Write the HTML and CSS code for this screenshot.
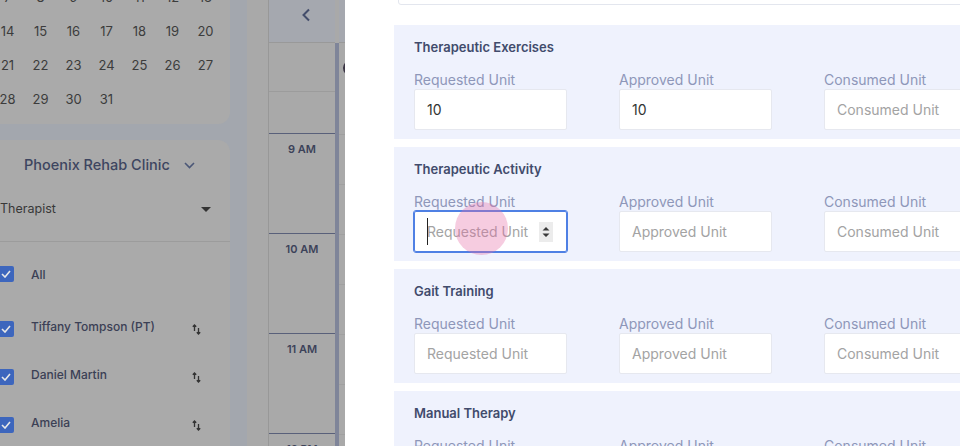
FILE: index.html
```html
<!DOCTYPE html>
<html>
<head>
<meta charset="utf-8">
<link rel="stylesheet" href="styles.css">
</head>
<body>
<div class="app">
  <aside class="sidebar">
    <div class="card cal-card">
      <div class="dates">
        <span>7</span><span>8</span><span>9</span><span>10</span><span>11</span><span>12</span><span>13</span>
        <span>14</span><span>15</span><span>16</span><span>17</span><span>18</span><span>19</span><span>20</span>
        <span>21</span><span>22</span><span>23</span><span>24</span><span>25</span><span>26</span><span>27</span>
        <span>28</span><span>29</span><span>30</span><span>31</span>
      </div>
    </div>
    <div class="card filter-card">
      <div class="clinic">
        <span>Phoenix Rehab Clinic</span>
        <svg class="chev" width="11" height="7" viewBox="0 0 11 7"><path d="M1 1l4.5 4.5L10 1" fill="none" stroke="#4b5777" stroke-width="1.6"/></svg>
      </div>
      <div class="select">
        <span>Therapist</span>
        <svg width="10" height="5" viewBox="0 0 10 5"><path d="M0 0h10L5 5z" fill="#333"/></svg>
      </div>
      <ul class="list">
        <li class="item first"><span class="cb"><svg width="10" height="8" viewBox="0 0 10 8"><path d="M1 4l3 3 5-6" fill="none" stroke="#e8e8e8" stroke-width="1.6"/></svg></span><span class="name">All</span></li>
        <li class="item"><span class="cb"><svg width="10" height="8" viewBox="0 0 10 8"><path d="M1 4l3 3 5-6" fill="none" stroke="#e8e8e8" stroke-width="1.6"/></svg></span><span class="name">Tiffany Tompson (PT)</span><svg class="sort" width="9" height="11" viewBox="0 0 9 11"><path d="M2.5 7V1M0.8 2.8L2.5 1l1.7 1.8M6.5 4v6M4.8 8.2L6.5 10l1.7-1.8" fill="none" stroke="#333" stroke-width="1.3"/></svg></li>
        <li class="item"><span class="cb"><svg width="10" height="8" viewBox="0 0 10 8"><path d="M1 4l3 3 5-6" fill="none" stroke="#e8e8e8" stroke-width="1.6"/></svg></span><span class="name">Daniel Martin</span><svg class="sort" width="9" height="11" viewBox="0 0 9 11"><path d="M2.5 7V1M0.8 2.8L2.5 1l1.7 1.8M6.5 4v6M4.8 8.2L6.5 10l1.7-1.8" fill="none" stroke="#333" stroke-width="1.3"/></svg></li>
        <li class="item"><span class="cb"><svg width="10" height="8" viewBox="0 0 10 8"><path d="M1 4l3 3 5-6" fill="none" stroke="#e8e8e8" stroke-width="1.6"/></svg></span><span class="name">Amelia</span><svg class="sort" width="9" height="11" viewBox="0 0 9 11"><path d="M2.5 7V1M0.8 2.8L2.5 1l1.7 1.8M6.5 4v6M4.8 8.2L6.5 10l1.7-1.8" fill="none" stroke="#333" stroke-width="1.3"/></svg></li>
      </ul>
    </div>
  </aside>
  <div class="gap"></div>
  <section class="calendar">
    <div class="strip"></div>
    <div class="times">
      <div class="head"><svg width="10" height="14" viewBox="0 0 10 14"><path d="M8 1.5L2.5 7 8 12.5" fill="none" stroke="#434d6b" stroke-width="2"/></svg></div>
      <div class="allday"></div>
      <div class="pre"></div>
      <div class="hour">9 AM</div>
      <div class="hour">10 AM</div>
      <div class="hour">11 AM</div>
      <div class="hour">12 PM</div>
    </div>
    <div class="bar"></div>
    <div class="col">
      <div class="col-head"></div>
      <div class="col-top"><span class="avatar"></span></div>
      <div class="slots"><i></i><i></i><i></i><i></i><i></i><i></i><i></i><i></i></div>
    </div>
  </section>
  <main class="drawer">
    <div class="top-input"></div>
    <div class="sec">
      <div class="title">Therapeutic Exercises</div>
      <div class="fields">
        <div class="field"><label>Requested Unit</label><div class="box val">10</div></div>
        <div class="field"><label>Approved Unit</label><div class="box val">10</div></div>
        <div class="field"><label>Consumed Unit</label><div class="box">Consumed Unit</div></div>
      </div>
    </div>
    <div class="sec">
      <div class="title">Therapeutic Activity</div>
      <div class="fields">
        <div class="field"><label>Requested Unit</label>
          <div class="box focus"><span class="caret"></span>Requested Unit
            <span class="spin"><svg width="8" height="14" viewBox="0 0 8 14"><path d="M0.5 5.5L4 2l3.5 3.5zM0.5 8.5L4 12l3.5-3.5z" fill="#3a3a3a"/></svg></span>
            <span class="ripple"></span>
          </div>
        </div>
        <div class="field"><label>Approved Unit</label><div class="box">Approved Unit</div></div>
        <div class="field"><label>Consumed Unit</label><div class="box">Consumed Unit</div></div>
      </div>
    </div>
    <div class="sec">
      <div class="title">Gait Training</div>
      <div class="fields">
        <div class="field"><label>Requested Unit</label><div class="box">Requested Unit</div></div>
        <div class="field"><label>Approved Unit</label><div class="box">Approved Unit</div></div>
        <div class="field"><label>Consumed Unit</label><div class="box">Consumed Unit</div></div>
      </div>
    </div>
    <div class="sec">
      <div class="title">Manual Therapy</div>
      <div class="fields">
        <div class="field"><label>Requested Unit</label><div class="box">Requested Unit</div></div>
        <div class="field"><label>Approved Unit</label><div class="box">Approved Unit</div></div>
        <div class="field"><label>Consumed Unit</label><div class="box">Consumed Unit</div></div>
      </div>
    </div>
  </main>
</div>
</body>
</html>
```
FILE: styles.css
```css
* { box-sizing: border-box; }
html, body { margin: 0; padding: 0; }
body {
  width: 960px; height: 446px; overflow: hidden;
  font-family: Inter, "Open Sans", sans-serif;
  background: #a3a7ae;
}
.app { display: flex; height: 446px; overflow: hidden; }

/* sidebar */
.sidebar { width: 230px; flex: none; display: flex; flex-direction: column; overflow: hidden; }
.card { background: #aaaaaa; }
.cal-card { flex: none; height: 124px; border-bottom-right-radius: 12px; overflow: hidden; }
.dates {
  display: grid; grid-template-columns: repeat(7, 33px); grid-auto-rows: 34px;
  margin: -20px 0 0 -9px;
  font-size: 13px; color: #3c3c3c;
}
.dates span { display: flex; align-items: center; justify-content: center; }
.filter-card { flex: none; margin-top: 16px; border-top-right-radius: 12px; padding-bottom: 40px; }
.clinic {
  height: 48px; display: flex; align-items: center; padding: 0 0 0 24px;
  font-size: 14.5px; font-weight: 500; color: #3d4560;
}
.clinic .chev { margin-left: 14px; margin-top: 2px; }
.select {
  height: 53px; display: flex; align-items: flex-start; justify-content: space-between;
  padding: 12px 19px 0 0; line-height: 18px;
  font-size: 12.5px; color: #383838;
}
.select svg { margin-top: 7px; }
.list { list-style: none; margin: 0; padding: 8px 0 0; border-top: 1px solid #9c9c9c; }
.item { height: 48px; display: flex; align-items: center; font-size: 12px; font-weight: 500; color: #3b4055; }
.item.first { margin-bottom: 7px; }
.cb {
  width: 16px; height: 16px; margin-left: -2px; border-radius: 2px; background: #3d66bd;
  display: flex; align-items: center; justify-content: center; flex: none;
}
.name { margin-left: 17px; margin-top: -5px; flex: 1; }
.first .name { margin-top: 0; }
.sort { margin-right: 29px; }

.gap { width: 17px; flex: none; }

/* calendar */
.calendar { width: 98px; flex: none; display: flex; background: #a9a9a9; }
.strip { width: 22px; border-right: 1px solid #989898; flex: none; }
.times { width: 66px; flex: none; }
.head { height: 43px; background: #a5a8af; border-bottom: 1px solid #999; display: flex; align-items: center; justify-content: center; padding: 0 0 12px 8px; }
.allday { height: 49px; border-bottom: 1px solid #9c9c9c; }
.pre { height: 41px; }
.hour {
  height: 100px; border-top: 1px solid #59607a; padding-top: 8px;
  font-size: 11px; font-weight: 600; color: #3c4259; text-align: center;
}
.bar { width: 4px; flex: none; background: #7f8599; margin-top: 43px; }
.col { width: 6px; flex: none; overflow: hidden; }
.col-head { height: 43px; background: #a5a8af; border-bottom: 1px solid #999; }
.col-top { height: 92px; border-bottom: 1px solid #9f9f9f; position: relative; }
.avatar { position: absolute; left: 4px; top: 17px; width: 16px; height: 16px; border-radius: 50%; background: #3a3444; }
.slots i { display: block; height: 50px; border-bottom: 1px solid #a0a0a0; }

/* drawer */
.drawer { flex: 1; background: #fff; padding-left: 49px; overflow: hidden; }
.top-input { height: 41px; margin: -36px 0 20px 4px; border: 1px solid #e3e6ee; border-radius: 3px; width: 700px; }
.sec {
  background: #eff2fd; width: 700px; height: 114px; margin-bottom: 8px;
  padding: 14px 0 0 20px;
}
.title { font-size: 13px; font-weight: 600; line-height: 16px; color: #414b6c; }
.fields { display: grid; grid-template-columns: repeat(3, 153px); column-gap: 52px; margin-top: 14px; }
.field label { display: block; font-size: 14px; line-height: 20px; color: #8e97b9; padding-top: 1px; }
.box {
  height: 41px; background: #fff; border: 1px solid #e6e8ef; border-radius: 2px;
  padding-left: 12px; display: flex; align-items: center;
  font-size: 14px; color: #a3a3a3; position: relative; margin-top: -1px;
}
.box.val { color: #333; }
.box.focus { outline: 1px solid #4f80e4; border-color: #4f80e4; }
.caret { width: 1px; height: 27px; background: #222; position: absolute; left: 12px; top: 6px; }
.spin { margin-left: auto; margin-right: 13px; width: 14px; height: 20px; background: #ececec; display: flex; align-items: center; justify-content: center; }
.ripple { position: absolute; left: 40px; top: -10px; width: 53px; height: 53px; border-radius: 50%; background: rgba(230, 110, 165, 0.35); }
```
